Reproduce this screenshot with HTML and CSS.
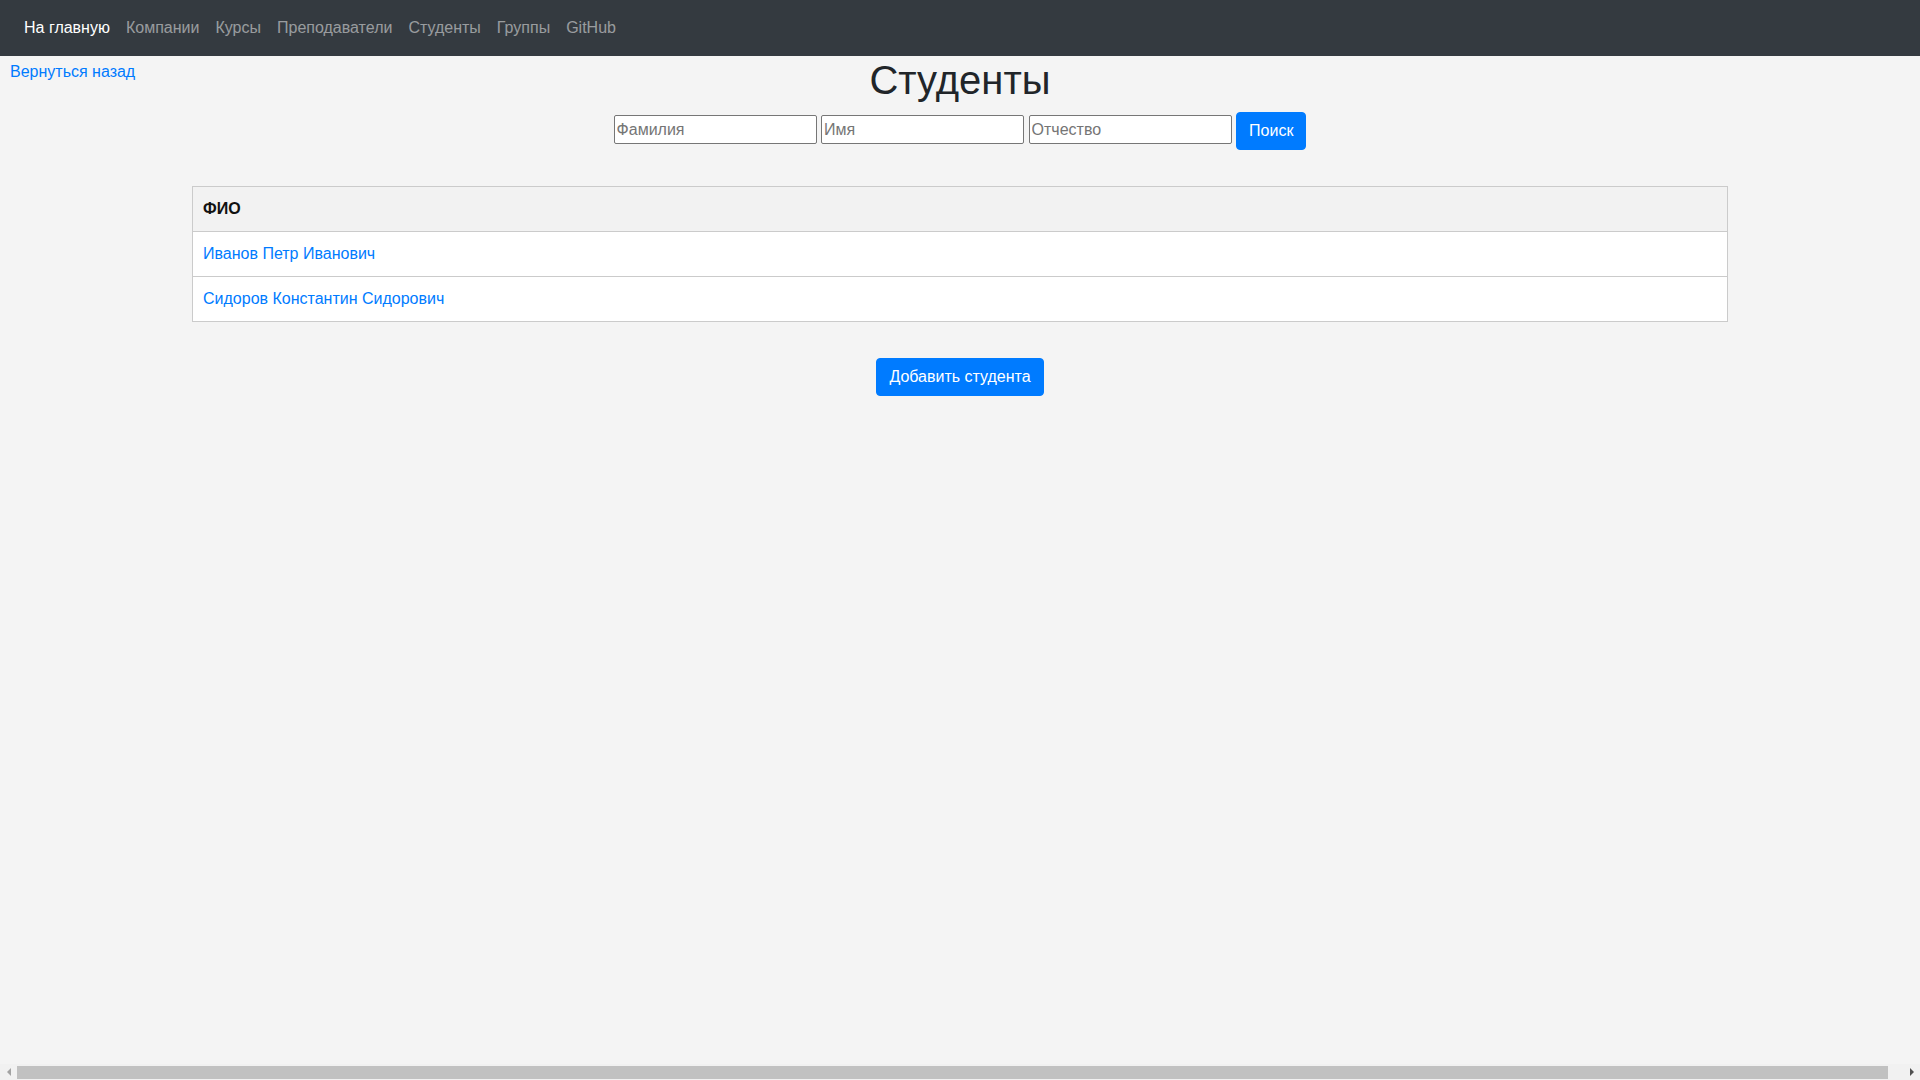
FILE: index.html
```html
<!DOCTYPE html>
<html lang="ru">
<head>
<meta charset="utf-8">
<title>Студенты</title>
<link rel="stylesheet" href="styles.css">
</head>
<body>
<nav class="navbar">
  <a class="nav-link active" href="#">На главную</a>
  <a class="nav-link" href="#">Компании</a>
  <a class="nav-link" href="#">Курсы</a>
  <a class="nav-link" href="#">Преподаватели</a>
  <a class="nav-link" href="#">Студенты</a>
  <a class="nav-link" href="#">Группы</a>
  <a class="nav-link" href="#">GitHub</a>
</nav>
<main class="page">
  <header class="page-head">
    <a class="back" href="#">Вернуться назад</a>
    <h1 class="title">Студенты</h1>
    <span></span>
  </header>
  <form class="search">
    <input class="field" type="text" placeholder="Фамилия">
    <input class="field" type="text" placeholder="Имя">
    <input class="field" type="text" placeholder="Отчество">
    <button class="btn" type="button">Поиск</button>
  </form>
  <table class="list">
    <thead>
      <tr><th>ФИО</th></tr>
    </thead>
    <tbody>
      <tr><td><a href="#">Иванов Петр Иванович</a></td></tr>
      <tr><td><a href="#">Сидоров Константин Сидорович</a></td></tr>
    </tbody>
  </table>
  <div class="actions">
    <button class="btn" type="button">Добавить студента</button>
  </div>
</main>
<div class="hscroll" aria-hidden="true">
  <span class="arrow arrow-left"></span>
  <span class="track"><span class="thumb"></span></span>
  <span class="arrow arrow-right"></span>
</div>
</body>
</html>
```
FILE: styles.css
```css
* { box-sizing: border-box; }
html, body {
  margin: 0;
  padding: 0;
}
body {
  background: #f4f4f4;
  font-family: "Liberation Sans", Arial, sans-serif;
  font-size: 16px;
  line-height: 24px;
  color: #212529;
  min-height: 100vh;
}
a { color: #007bff; text-decoration: none; }

.navbar {
  display: flex;
  align-items: center;
  height: 56px;
  padding: 8px 16px;
  background: #343a40;
}
.nav-link {
  padding: 8px;
  color: rgba(255, 255, 255, 0.5);
  line-height: 24px;
}
.nav-link.active { color: #fff; }

.page { width: 1920px; }
.page-head {
  display: grid;
  grid-template-columns: 1fr auto 1fr;
  align-items: start;
}
.back {
  justify-self: start;
  margin: 4px 0 0 10px;
}
.title {
  margin: 0 0 8px;
  font-size: 40px;
  line-height: 48px;
  font-weight: 400;
  color: #212529;
}
.search {
  display: flex;
  justify-content: center;
  align-items: flex-start;
  gap: 4.5px;
  margin: 0;
}
.field {
  width: 203px;
  height: 29px;
  margin-top: 3px;
  padding: 1px 2px;
  border: 1px solid #767676;
  border-radius: 2px;
  background: #fff;
  font-family: "Liberation Sans", Arial, sans-serif;
  font-size: 16px;
  color: #212529;
}
.field::placeholder { color: #757575; }
.btn {
  height: 38px;
  padding: 6px 12px;
  border: 1px solid #007bff;
  border-radius: 4px;
  background: #007bff;
  color: #fff;
  font-family: "Liberation Sans", Arial, sans-serif;
  font-size: 16px;
  line-height: 24px;
}
.list {
  width: 1536px;
  margin: 36px 0 0 192px;
  border-collapse: collapse;
  border: 1px solid #cbcbcb;
}
.list th, .list td {
  height: 45px;
  padding: 10px 10px;
  text-align: left;
  border-top: 1px solid #cbcbcb;
  line-height: 24px;
}
.list th {
  background: #f2f2f2;
  font-weight: 700;
  color: #111;
}
.list td { background: #fff; }
.actions {
  display: flex;
  justify-content: center;
  margin-top: 36px;
}

/* imitation of the browser's horizontal scrollbar */
.hscroll {
  position: fixed;
  left: 0;
  right: 0;
  bottom: 0;
  height: 16px;
  display: flex;
  align-items: center;
  background: #f1f1f1;
}
.arrow {
  width: 17px;
  height: 16px;
  display: flex;
  align-items: center;
  justify-content: center;
}
.arrow::before {
  content: "";
  width: 0;
  height: 0;
  border-top: 4px solid transparent;
  border-bottom: 4px solid transparent;
}
.arrow-left::before { border-right: 4px solid #a3a3a3; }
.arrow-right::before { border-left: 4px solid #505050; }
.track {
  flex: 1;
  height: 16px;
  display: flex;
  align-items: center;
}
.thumb {
  width: 99.2%;
  height: 13px;
  background: #c1c1c1;
}
```
